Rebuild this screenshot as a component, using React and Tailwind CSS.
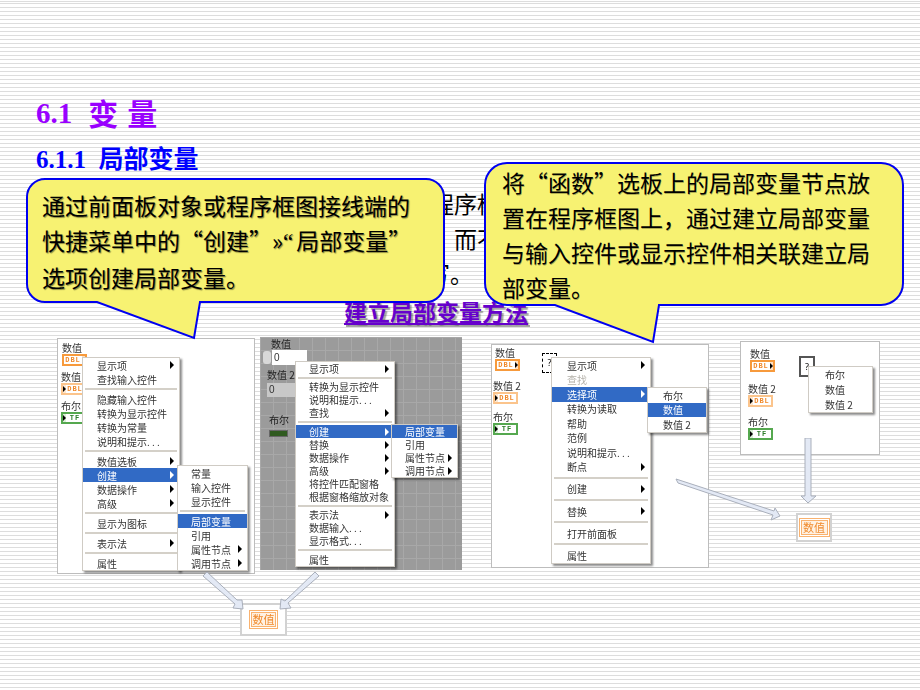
import React from "react";

const SERIF = "font-['Liberation_Serif','Noto_Sans_CJK_SC',serif]";
const CJK = "font-['Noto_Sans_CJK_SC',sans-serif]";

const menuOne = [
  ["显示项", ">"], ["查找输入控件"], "-",
  ["隐藏输入控件"], ["转换为显示控件"], ["转换为常量"], ["说明和提示. . ."], "-",
  ["数值选板", ">"], ["创建", ">", "on"], ["数据操作", ">"], ["高级", ">"], "-",
  ["显示为图标"], "-", ["表示法", ">"], "-", ["属性"],
];
const subOne = [
  ["常量"], ["输入控件"], ["显示控件"], "-",
  ["局部变量", null, "on"], ["引用"], ["属性节点", ">"], ["调用节点", ">"],
];
const menuTwo = [
  ["显示项", ">"], "-",
  ["转换为显示控件"], ["说明和提示. . ."], ["查找", ">"], "-",
  ["创建", ">", "on"], ["替换", ">"], ["数据操作", ">"], ["高级", ">"], ["将控件匹配窗格"], ["根据窗格缩放对象"], "-",
  ["表示法", ">"], ["数据输入. . ."], ["显示格式. . ."], "-", ["属性"],
];
const subTwo = [["局部变量", null, "on"], ["引用"], ["属性节点", ">"], ["调用节点", ">"]];
const menuThree = [
  ["显示项", ">"], ["查找", null, "off"], ["选择项", ">", "on"], ["转换为读取"], ["帮助"], ["范例"], ["说明和提示. . ."], ["断点", ">"], "-",
  ["创建", ">"], "-", ["替换", ">"], "-", ["打开前面板"], "-", ["属性"],
];
const subThree = [["布尔"], ["数值", null, "on"], ["数值 2"]];
const subFour = [["布尔"], ["数值"], ["数值 2"]];

function Menu({ items, className, rowClass, sepClass, textClass = "pl-[14px]" }) {
  return (
    <div className={`absolute bg-white border border-[#cfcbc4] shadow-[2px_2px_2px_rgba(0,0,0,0.45)] text-[10px] text-[#333] ${CJK} ${className}`}>
      {items.map((item, i) =>
        item === "-" ? (
          <div key={i} className={`flex items-center px-[2px] ${sepClass}`}>
            <div className="h-[2px] w-full bg-[#d4d0c8]" />
          </div>
        ) : (
          <div
            key={i}
            className={`flex items-center justify-between pr-[5px] whitespace-nowrap ${textClass} ${rowClass} ${
              item[2] === "on" ? "bg-[#316ac5] text-white" : item[2] === "off" ? "text-[#b5b2ab]" : ""
            }`}
          >
            {item[0]}
            {item[1] && (
              <span className={`h-0 w-0 border-y-[4px] border-l-[4px] border-y-transparent ${item[2] === "on" ? "border-l-white" : "border-l-black"}`} />
            )}
          </div>
        )
      )}
    </div>
  );
}

// block diagram terminal with its label
function Terminal({ label, className = "", tf, pale }) {
  const tone = tf ? "border-[#55a84f] bg-[#d9f0d6]" : pale ? "border-[#fbc48c] bg-[#fde7d0]" : "border-[#f79a3c] bg-[#fde0c4]";
  const tip = <span className="h-0 w-0 shrink-0 border-y-[3px] border-l-[3px] border-y-transparent border-l-black" />;
  return (
    <div className={className}>
      <div className={`text-[10px] leading-[12px] text-[#333] whitespace-nowrap ${CJK}`}>{label}</div>
      <div className={`flex items-center h-[12px] w-[25px] border-2 ${tone}`}>
        {(tf || pale) && tip}
        <span className={`flex-1 bg-white text-center text-[7px] font-bold leading-[8px] tracking-[1px] font-['Liberation_Mono',monospace] ${tf ? "text-[#2d7d2a]" : "text-[#f08a2c]"}`}>
          {tf ? "TF" : "DBL"}
        </span>
        {!tf && !pale && tip}
      </div>
    </div>
  );
}

function Callout({ className, svgClass, path, children, textClass, viewBox }) {
  return (
    <div className={`absolute ${className}`}>
      <svg className={`absolute left-0 top-0 ${svgClass}`} viewBox={viewBox}>
        <path d={path} fill="#f7f272" stroke="#0000f0" strokeWidth="2" />
      </svg>
      <div className={`relative text-[23px] leading-[35px] text-black whitespace-nowrap ${CJK} ${textClass}`}>
        {children}
      </div>
    </div>
  );
}

function Arrow({ className, viewBox, points }) {
  return (
    <svg className={`absolute ${className}`} viewBox={viewBox}>
      <polygon points={points} fill="#e3e9f5" stroke="#a9afbb" strokeWidth="1" />
    </svg>
  );
}

function ValueBox({ className, innerClass }) {
  return (
    <div className={`flex items-center justify-center bg-white border-2 border-[#d2d2d2] blur-[0.4px] ${className}`}>
      <div className={`flex items-center justify-center whitespace-nowrap border border-[#f9b26f] bg-[#fff1e2] text-[11px] leading-none text-[#f08a2c] outline outline-1 outline-offset-1 outline-[#f9b26f] ${CJK} ${innerClass}`}>
        数值
      </div>
    </div>
  );
}

export default function App() {
  return (
    <div className="relative h-[690px] w-[920px] overflow-hidden bg-[repeating-linear-gradient(to_bottom,#dddddd_0,#dddddd_1px,#ffffff_1px,#ffffff_4px)] bg-[position:0_3px] pl-[36px] pt-[97px]">
      <h1 className={`flex items-center h-[34px] text-[29px] font-bold text-[#9900ff] ${SERIF}`}>
        <span>6.1</span>
        <span className="ml-[16px] text-[30px]">变</span>
        <span className="ml-[9px] text-[30px]">量</span>
      </h1>
      <h2 className={`mt-[14px] flex items-center h-[30px] text-[25px] font-bold text-[#0000ff] whitespace-pre ${SERIF}`}>6.1.1  局部变量</h2>

      {/* body text, mostly hidden by the callouts */}
      <div className={`mt-[11px] text-[23px] leading-[35px] text-black whitespace-nowrap ${CJK}`}>
        <div className="pl-[395px]">程序框</div>
        <div className="pl-[418px]">而不</div>
        <div className="pl-[391px]">写。</div>
      </div>

      <div className={`mt-[6px] pl-[308px] h-[28px] text-[23px] leading-[28px] font-bold text-[#6600cc] whitespace-nowrap ${CJK}`}>
        <span className="underline [text-shadow:2px_2px_1px_rgba(0,0,0,0.35)]">建立局部变量方法</span>
      </div>

      {/* LabVIEW captures */}
      <div className="mt-[12px] ml-[21px] flex items-start">
        <div className="flex flex-col">
          <div className="flex items-start">
            <div className="relative mt-[1px] flex h-[236px] w-[198px] flex-col items-start border border-[#bdbdbd] bg-white pl-[4px] pt-[3px] blur-[0.4px]">
              <Terminal label="数值" />
              <Terminal label="数值" className="mt-[5px] -ml-px" pale />
              <Terminal label="布尔" className="mt-[5px] -ml-px" tf />
              <Menu items={menuOne} className="left-[24px] top-[18px] w-[98px]" rowClass="h-[14px]" sepClass="h-[6px]" />
              <Menu items={subOne} className="left-[119px] top-[126px] w-[71px]" rowClass="h-[14px]" sepClass="h-[6px]" textClass="pl-[13px]" />
            </div>

            <div className={`relative ml-[5px] flex h-[233px] w-[202px] flex-col items-start bg-[#9b9b9b] bg-[linear-gradient(#a8a8a8_1px,transparent_1px),linear-gradient(90deg,#a8a8a8_1px,transparent_1px)] bg-[size:13px_13px] pl-[3px] pt-px text-[10px] leading-[12px] text-[#222] blur-[0.4px] ${CJK}`}>
              <div className="ml-[8px]">数值</div>
              <div className="flex items-center">
                <div className="h-[13px] w-[8px] rounded-[3px] bg-[#d8d8d8]" />
                <div className="ml-px flex h-[15px] w-[35px] items-center bg-white pl-[2px] text-[#333] font-['Liberation_Sans',sans-serif]">0</div>
              </div>
              <div className="ml-[4px] mt-[4px]">数值 2</div>
              <div className="ml-[4px] mt-[2px] flex h-[14px] w-[30px] items-center bg-[#c8c8c8] pl-[2px] text-[#333] font-['Liberation_Sans',sans-serif]">0</div>
              <div className="ml-[6px] mt-[17px]">布尔</div>
              <div className="ml-[6px] mt-[4px] h-[7px] w-[19px] border border-[#666] bg-[#2f5a1f]" />
              <Menu items={menuTwo} className="left-[35px] top-[24px] w-[100px]" rowClass="h-[13px]" sepClass="h-[5.5px]" textClass="pl-[13px]" />
              <Menu items={subTwo} className="left-[131px] top-[87px] w-[67px]" rowClass="h-[13px]" sepClass="h-[6px]" textClass="pl-[13px]" />
            </div>
          </div>
          <ValueBox className="ml-[183px] mt-[29px] h-[33px] w-[47px]" innerClass="h-[15px] w-[25px]" />
        </div>

        <div className="relative ml-[29px] mt-[7px] flex h-[224px] w-[218px] flex-col items-start border border-[#bdbdbd] bg-white pl-[2px] pt-[2px] blur-[0.4px]">
          <Terminal label="数值" className="ml-px" />
          <Terminal label="数值 2" className="mt-[9px] -ml-px" pale />
          <Terminal label="布尔" className="mt-[7px] -ml-px" tf />
          <div className="absolute left-[50px] top-[8px] flex h-[20px] w-[15px] items-center justify-center border border-dashed border-black text-[9px]">?</div>
          <Menu items={menuThree} className="left-[59px] top-[12px] w-[100px]" rowClass="h-[14.5px]" sepClass="h-[7.7px]" textClass="pl-[15px]" />
          <Menu items={subThree} className="left-[155px] top-[42px] w-[60px]" rowClass="h-[14.5px]" sepClass="h-[6px]" textClass="pl-[15px]" />
        </div>

        <div className="ml-[31px] mt-[4px] flex flex-col">
          <div className="relative flex h-[114px] w-[140px] flex-col items-start border border-[#bdbdbd] bg-white pl-[9px] pt-[6px] blur-[0.4px]">
            <Terminal label="数值" />
            <Terminal label="数值 2" className="mt-[11px] -ml-[2px]" pale />
            <Terminal label="布尔" className="mt-[9px] -ml-[2px]" tf />
            <div className="absolute left-[58px] top-[14px] flex h-[21px] w-[16px] items-center justify-center border-2 border-[#555] text-[9px]">?</div>
            <Menu items={subFour} className="left-[67px] top-[24px] w-[65px]" rowClass="h-[15px]" sepClass="h-[6px]" textClass="pl-[16px]" />
          </div>
          <ValueBox className="ml-[56px] mt-[58px] h-[29px] w-[36px]" innerClass="h-[15px] w-[27px]" />
        </div>
      </div>

      <Arrow className="left-[200px] top-[570px] h-[42px] w-[125px]" viewBox="200 570 125 42"
        points="203,576 207,572 237,600 242,600 243,609 233,608 235,604" />
      <Arrow className="left-[200px] top-[570px] h-[42px] w-[125px]" viewBox="200 570 125 42"
        points="315,572 319,576 288,603 291,608 280,609 281,599 285,601" />
      <Arrow className="left-[670px] top-[478px] h-[45px] w-[115px]" viewBox="670 478 115 45"
        points="676,479 678,483 773,515 771,520 780,516 775,508 774,511" />
      <Arrow className="left-[798px] top-[438px] h-[68px] w-[22px]" viewBox="798 438 22 68"
        points="805,438 811,438 811,496 816,496 808,503 801,496 805,496" />

      <Callout
        className="left-[26px] top-[178px] h-[162px] w-[420px]"
        svgClass="h-[162px] w-[420px]"
        viewBox="0 0 420 162"
        path="M19 1 H400 A18 18 0 0 1 418 19 V106 A18 18 0 0 1 400 124 H174 L168 160 L71 124 H19 A18 18 0 0 1 1 106 V19 A18 18 0 0 1 19 1 Z"
        textClass="pl-[16px] pt-[10px] [text-shadow:1px_1px_1px_rgba(0,0,0,0.45)]"
      >
        <div>通过前面板对象或程序框图接线端的</div>
        <div>快捷菜单中的“创建”»<span className="mr-[3px] font-['Liberation_Serif']">“</span>局部变量”</div>
        <div>选项创建局部变量。</div>
      </Callout>
      <Callout
        className="left-[484px] top-[162px] h-[182px] w-[422px]"
        svgClass="h-[182px] w-[422px]"
        viewBox="0 0 422 182"
        path="M23 1 H397 A22 22 0 0 1 419 23 V121 A22 22 0 0 1 397 143 H175 L169 180 L71 143 H23 A22 22 0 0 1 1 121 V23 A22 22 0 0 1 23 1 Z"
        textClass="pl-[18px] pt-[3px] [text-shadow:0.5px_0.5px_0.5px_rgba(0,0,0,0.3)]"
      >
        <div>将“函数”选板上的局部变量节点放</div>
        <div>置在程序框图上，通过建立局部变量</div>
        <div>与输入控件或显示控件相关联建立局</div>
        <div>部变量。</div>
      </Callout>
    </div>
  );
}
